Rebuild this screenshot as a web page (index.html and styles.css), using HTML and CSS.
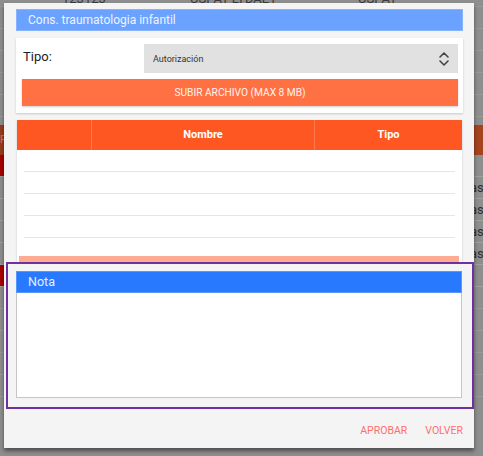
FILE: index.html
```html
<!DOCTYPE html>
<html lang="es">
<head>
<meta charset="utf-8">
<title>Adjuntos</title>
<link rel="stylesheet" href="styles.css">
</head>
<body>
<div class="backdrop">
  <div class="bg-row bg-top">
    <span class="c1">123123</span><span class="c2">USPAT LTDAET</span><span class="c3">USPAT</span>
  </div>
  <div class="bg-row"></div>
  <div class="bg-row"></div>
  <div class="bg-row"></div>
  <div class="bg-row"></div>
  <div class="bg-row"></div>
  <div class="bg-row bg-head"><span class="red-cell">R</span><span class="rtext"></span></div>
  <div class="bg-row data"><span class="red-cell"></span><span class="rtext"></span></div>
  <div class="bg-row data"><span class="red-cell"></span><span class="rtext">as</span></div>
  <div class="bg-row data"><span class="red-cell"></span><span class="rtext">as</span></div>
  <div class="bg-row data"><span class="red-cell"></span><span class="rtext">as</span></div>
  <div class="bg-row data"><span class="red-cell"></span><span class="rtext">as</span></div>
  <div class="bg-row data"><span class="red-cell"></span><span class="rtext"></span></div>
  <div class="bg-row"></div>
  <div class="bg-row"></div>
  <div class="bg-row"></div>
  <div class="bg-row"></div>
  <div class="bg-row"></div>
</div>

<div class="modal">
  <div class="title-bar">Cons. traumatologia infantil</div>

  <div class="card form-card">
    <div class="form-row">
      <label class="tipo-label">Tipo:</label>
      <div class="select">
        <span>Autorización</span>
        <svg class="chev" width="12" height="16" viewBox="0 0 12 16"><path d="M2 6 L6 2 L10 6 M2 10 L6 14 L10 10" fill="none" stroke="#444" stroke-width="1.6" stroke-linecap="round" stroke-linejoin="round"/></svg>
      </div>
    </div>
    <button class="upload">SUBIR ARCHIVO (MAX 8 MB)</button>
  </div>

  <div class="card table-card">
    <div class="thead">
      <div class="th"></div>
      <div class="th">Nombre</div>
      <div class="th">Tipo</div>
    </div>
    <div class="tbody">
      <div class="tr"></div>
      <div class="tr"></div>
      <div class="tr"></div>
      <div class="tr"></div>
    </div>
    <div class="pink-bar"></div>
  </div>

  <div class="nota-box">
    <div class="nota">
      <div class="nota-head">Nota</div>
      <div class="nota-body"></div>
    </div>
  </div>

  <div class="actions">
    <span class="act">APROBAR</span>
    <span class="act">VOLVER</span>
  </div>
</div>
</body>
</html>
```

FILE: styles.css
```css
* { box-sizing: border-box; }
html, body { margin: 0; padding: 0; }
body {
  width: 483px;
  height: 456px;
  overflow: hidden;
  background: #8e8e8e;
  font-family: Roboto, "Liberation Sans", sans-serif;
  position: relative;
}

/* backdrop page (dimmed) */
.backdrop { display: flex; flex-direction: column; }
.bg-row {
  height: 22px;
  border-bottom: 1px solid #999;
  display: flex;
  font-size: 13px;
  color: #3a3a3a;
}
.bg-top { height: 14px; margin-top: -7px; align-items: flex-end; line-height: 14px; }
.bg-top .c1 { margin-left: 62px; width: 128px; }
.bg-top .c2 { width: 168px; }
.bg-row.bg-head { height: 30px; background: #a5431e; border-bottom: none; margin-top: 8px; }
.bg-head .red-cell { background: #9a3c1c; color: #c0806a; font-size: 11px; line-height: 30px; }
.red-cell { width: 4px; overflow: hidden; background: #a80000; }
.rtext { margin-left: 470px; line-height: 22px; color: #2f2f2f; }
.bg-row.data { border-bottom: 1px solid #a0a0a0; }

/* modal */
.modal {
  position: absolute;
  left: 4px;
  top: 3px;
  width: 470px;
  height: 445px;
  background: #f4f4f4;
  box-shadow: 0 3px 4px rgba(0,0,0,0.45);
  display: flex;
  flex-direction: column;
  padding: 6px 11px 0 12px;
}
.title-bar {
  height: 22px;
  background: #6ba1ff;
  border: 1px solid #86b2ff;
  color: #eef4ff;
  font-size: 12px;
  line-height: 20px;
  padding-left: 11px;
}
.card {
  background: #fff;
  box-shadow: 0 1px 2px rgba(0,0,0,0.18);
}
.form-card {
  margin-top: 7px;
  height: 75px;
  padding: 6px 5px 6px 6px;
  display: flex;
  flex-direction: column;
  gap: 6px;
}
.form-row { display: flex; align-items: stretch; height: 29px; }
.tipo-label {
  width: 122px;
  font-size: 13px;
  color: #222;
  padding-top: 5px;
  padding-left: 1px;
}
.select {
  flex: 1;
  background: #e1e1e1;
  display: flex;
  align-items: center;
  justify-content: space-between;
  padding: 0 8px 0 9px;
  font-size: 9px;
  color: #333;
}
.upload {
  height: 27px;
  border: none;
  background: #ff7043;
  color: #fff3ee;
  font-family: inherit;
  font-size: 10.2px;
  padding: 0;
  box-shadow: 0 1px 2px rgba(0,0,0,0.2);
}

.table-card {
  margin-top: 7px;
  margin-left: 1px;
  margin-right: 1px;
  height: 142px;
  overflow: hidden;
  display: flex;
  flex-direction: column;
}
.thead {
  height: 30px;
  background: #ff5722;
  display: grid;
  grid-template-columns: 74px 223px 1fr;
}
.th {
  color: #fff;
  font-weight: bold;
  font-size: 11px;
  text-align: center;
  line-height: 30px;
  border-left: 1px solid #ff7a50;
}
.th:first-child { border-left: none; }
.tbody { padding: 0 7px; }
.tr { height: 22px; border-bottom: 1.5px solid #e6e6e6; }
.pink-bar {
  margin: 18px 3px 0 2px;
  height: 8px;
  background: #ffab91;
}

.nota-box {
  margin: 0 -11px 0 -10px;
  height: 147px;
  border: 2px solid #7030a0;
  padding: 7px 10px 0 8px;
}
.nota-head {
  height: 22px;
  background: #2979ff;
  border: 1px solid #5a96ff;
  color: #e4eeff;
  font-size: 12.5px;
  line-height: 20px;
  padding-left: 11px;
}
.nota-body {
  height: 105px;
  background: #fff;
  border: 1px solid #c6c6c6;
  border-top: none;
}

.actions {
  display: flex;
  justify-content: flex-end;
  gap: 18px;
  padding-top: 15px;
  padding-right: 0;
}
.act {
  color: #ff6e6e;
  font-size: 10.5px;
  line-height: 14px;
}
```
